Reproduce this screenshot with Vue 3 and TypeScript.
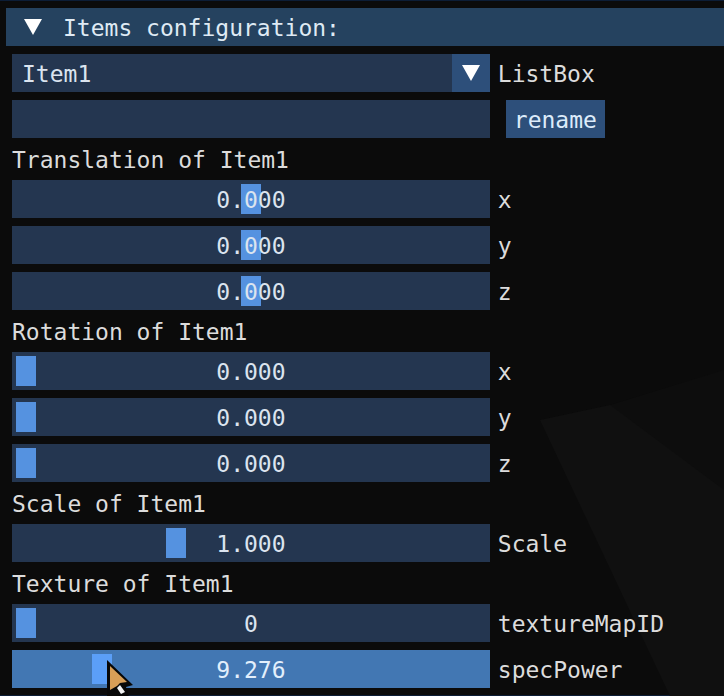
<script setup lang="ts">
import { computed, reactive, ref } from 'vue'

interface Slider {
  id: string
  label: string
  min: number
  max: number
  value: number
  digits: number
  active?: boolean
}

interface Group {
  title: string
  sliders: Slider[]
}

const items = reactive(['Item1', 'Item2', 'Item3'])
const selected = ref('Item1')
const newName = ref('')
const open = ref(true)

function axes(prefix: string, min: number, max: number): Slider[] {
  return ['x', 'y', 'z'].map((axis) => ({
    id: `${prefix}-${axis}`,
    label: axis,
    min,
    max,
    value: 0,
    digits: 3,
  }))
}

const groups = reactive<Group[]>([
  { title: 'Translation', sliders: axes('translation', -10, 10) },
  { title: 'Rotation', sliders: axes('rotation', 0, 360) },
  {
    title: 'Scale',
    sliders: [{ id: 'scale', label: 'Scale', min: 0, max: 3, value: 1, digits: 3 }],
  },
  {
    title: 'Texture',
    sliders: [
      { id: 'texture', label: 'textureMapID', min: 0, max: 8, value: 0, digits: 0 },
      { id: 'spec', label: 'specPower', min: 1, max: 50, value: 9.276, digits: 3, active: true },
    ],
  },
])

const canRename = computed(() => newName.value.trim().length > 0)

function rename(): void {
  if (!canRename.value) return
  const index = items.indexOf(selected.value)
  items[index] = newName.value.trim()
  selected.value = items[index]
  newName.value = ''
}
</script>

<template>
  <main class="panel">
    <svg class="scene" viewBox="0 0 184 336" aria-hidden="true">
      <polygon points="0,60 70,45 184,10 184,336 130,336" fill="#0d0d0d" />
      <polygon points="0,60 70,45 184,130 184,336 130,336" fill="#101010" />
    </svg>

    <div class="edge"></div>
    <button class="header" type="button" :aria-expanded="open" @click="open = !open">
      <svg class="arrow" :class="{ closed: !open }" viewBox="0 0 18 16" aria-hidden="true">
        <polygon points="0,0 18,0 9,16" fill="#ffffff" />
      </svg>
      <span class="caption">Items configuration:</span>
    </button>

    <div v-if="open" class="body">
      <div class="row">
        <div class="frame combo">
          <select id="list-box" v-model="selected" class="select">
            <option v-for="item in items" :key="item" :value="item">{{ item }}</option>
          </select>
          <span class="drop">
            <svg class="arrow" viewBox="0 0 18 16" aria-hidden="true">
              <polygon points="0,0 18,0 9,16" fill="#ffffff" />
            </svg>
          </span>
        </div>
        <label class="label" for="list-box">ListBox</label>
      </div>

      <div class="row wide">
        <input v-model="newName" class="frame text" type="text" aria-label="New name" />
        <button class="rename" type="button" @click="rename">rename</button>
      </div>

      <template v-for="group in groups" :key="group.title">
        <h2 class="title">{{ group.title }} of {{ selected }}</h2>
        <div v-for="slider in group.sliders" :key="slider.id" class="row">
          <div class="frame slider" :class="{ active: slider.active }">
            <input
              :id="slider.id"
              v-model.number="slider.value"
              class="range"
              type="range"
              :min="slider.min"
              :max="slider.max"
              :step="slider.digits ? 0.001 : 1"
            />
            <output class="value" :for="slider.id">{{ slider.value.toFixed(slider.digits) }}</output>
            <svg v-if="slider.active" class="cursor" viewBox="0 0 28 38" aria-hidden="true">
              <path d="M1 1 L27 26 L20 28 L23 38 H1 Z" fill="#080808" />
              <path d="M4 7 L21 23 L14 24 L11 27 L4 31 Z" fill="#d99f57" />
              <path d="M11 29 L14 26 L19 33 L15 35 Z" fill="#f4f4f4" />
            </svg>
          </div>
          <label class="label" :for="slider.id">{{ slider.label }}</label>
        </div>
      </template>
    </div>
    <div class="edge"></div>
  </main>
</template>

<style>
body {
  margin: 0;
  background: #0b0b0b;
}
</style>

<style scoped>
.panel {
  position: relative;
  display: flex;
  flex-direction: column;
  min-height: 100vh;
  box-sizing: border-box;
  overflow: hidden;
  background: #0b0b0b;
  color: #dcdcdc;
  font: 23px/26px "DejaVu Sans Mono", monospace;
}

.scene {
  position: absolute;
  right: 0;
  bottom: 0;
  width: 184px;
  height: 336px;
}

.edge {
  height: 1px;
  background: #0c1d36;
}

button,
input,
select {
  box-sizing: border-box;
  margin: 0;
  border: 0;
  border-radius: 0;
  outline: 0;
  font: inherit;
}

.header {
  display: flex;
  align-items: center;
  gap: 21px;
  height: 38px;
  margin: 7px 0 0 6px;
  padding: 0 18px;
  background: #25425f;
  color: #dfeaf4;
  text-align: left;
}

.caption,
.label,
.value {
  padding-top: 2px;
}

.arrow {
  width: 18px;
  height: 16px;
}

.arrow.closed {
  transform: rotate(-90deg);
}

.body {
  position: relative;
  display: flex;
  flex-direction: column;
  gap: 8px;
  padding: 8px 0 7px 12px;
}

.row {
  display: flex;
  align-items: center;
  gap: 8px;
  height: 38px;
}

.row.wide {
  gap: 16px;
}

.frame {
  flex: none;
  width: 66vw;
  height: 38px;
  background: #243650;
  color: #dbe4ef;
}

.combo,
.slider {
  display: grid;
  position: relative;
}

.select {
  grid-area: 1 / 1;
  width: 100%;
  padding: 2px 38px 0 10px;
  appearance: none;
  background: transparent;
  color: inherit;
}

.drop {
  grid-area: 1 / 1;
  justify-self: end;
  display: grid;
  place-items: center;
  width: 38px;
  background: #2d4f7a;
  pointer-events: none;
}

.text {
  padding: 2px 10px 0;
}

.rename {
  height: 38px;
  padding: 2px 8px 0;
  background: #2d4f7a;
  color: #dcebfa;
}

.title {
  height: 26px;
  margin: 0;
  font: inherit;
  line-height: 28px;
}

.range {
  grid-area: 1 / 1;
  width: 100%;
  height: 38px;
  padding: 0 4px;
  appearance: none;
  background: transparent;
}

.range::-webkit-slider-thumb {
  appearance: none;
  width: 20px;
  height: 30px;
  border-radius: 0;
  background: #5592e0;
}

.value {
  grid-area: 1 / 1;
  place-self: center;
  position: relative;
  pointer-events: none;
}

.active {
  background: #4277b3;
  color: #e2effc;
}

.active .range::-webkit-slider-thumb {
  background: #5b9ff8;
}

.cursor {
  position: absolute;
  left: 94px;
  top: 9px;
  width: 28px;
  height: 38px;
  pointer-events: none;
}
</style>
